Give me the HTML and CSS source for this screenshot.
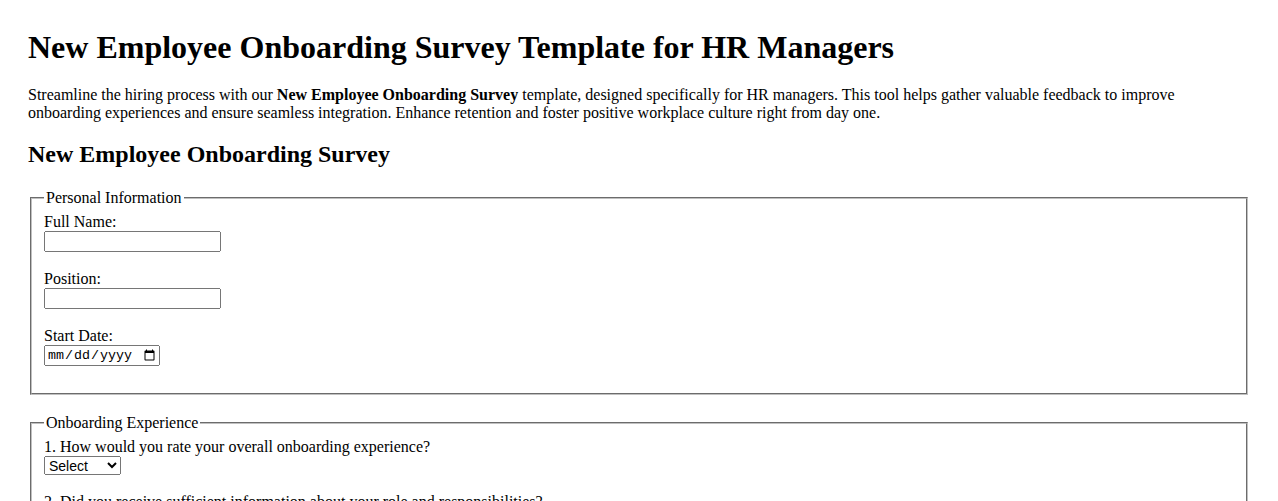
FILE: index.html
```html
<!DOCTYPE html>
<html lang="en">
<head>
<meta charset="utf-8">
<title>New Employee Onboarding Survey Template for HR Managers</title>
<link rel="stylesheet" href="styles.css">
</head>
<body>
<h1 class="title">New Employee Onboarding Survey Template for HR Managers</h1>
<p class="intro">Streamline the hiring process with our <strong>New Employee Onboarding Survey</strong> template, designed specifically for HR managers. This tool helps gather valuable feedback to improve onboarding experiences and ensure seamless integration. Enhance retention and foster positive workplace culture right from day one.</p>
<h2 class="form-title">New Employee Onboarding Survey</h2>
<form class="survey">
  <fieldset class="group">
    <legend>Personal Information</legend>
    <label for="name">Full Name:</label><br>
    <input class="field" type="text" id="name" name="name"><br><br>
    <label for="position">Position:</label><br>
    <input class="field" type="text" id="position" name="position"><br><br>
    <label for="start">Start Date:</label><br>
    <input class="date" type="date" id="start" name="start"><br><br>
  </fieldset>
  <fieldset class="group">
    <legend>Onboarding Experience</legend>
    <label for="q1">1. How would you rate your overall onboarding experience?</label><br>
    <select class="choice" id="q1" name="q1">
      <option>Select</option>
      <option>Excellent</option>
      <option>Good</option>
      <option>Average</option>
      <option>Poor</option>
    </select><br><br>
    <label for="q2">2. Did you receive sufficient information about your role and responsibilities?</label><br>
    <select class="choice" id="q2" name="q2">
      <option>Select</option>
      <option>Yes</option>
      <option>No</option>
    </select><br><br>
  </fieldset>
</form>
</body>
</html>
```
FILE: styles.css
```css
body {
  margin: 8px;
  padding: 0 20px 20px;
  font-family: "Liberation Serif", "Times New Roman", serif;
  font-size: 16px;
  color: #000;
  background: #fff;
}

.title {
  font-size: 32px;
  margin: 21px 0 20px;
}

.intro {
  margin: 15px 0 16px;
}

.form-title {
  font-size: 24px;
  margin: 19px 0 21px;
}

.group {
  margin: 0 2px 19px;
  border: 2px groove #c0c0c0;
  padding: 6px 12px 9px;
}

.group legend {
  padding: 0 2px;
}

.field,
.date,
.choice {
  font-family: "Liberation Sans", Arial, sans-serif;
  font-size: 13.333px;
}

.field {
  width: 177px;
  height: 21px;
  box-sizing: border-box;
}

.date {
  width: 116px;
  height: 21px;
  box-sizing: border-box;
  font-family: "Liberation Mono", "Courier New", monospace;
}

.choice {
  width: 77px;
  height: 19px;
  box-sizing: border-box;
  font-size: 14px;
}
```
